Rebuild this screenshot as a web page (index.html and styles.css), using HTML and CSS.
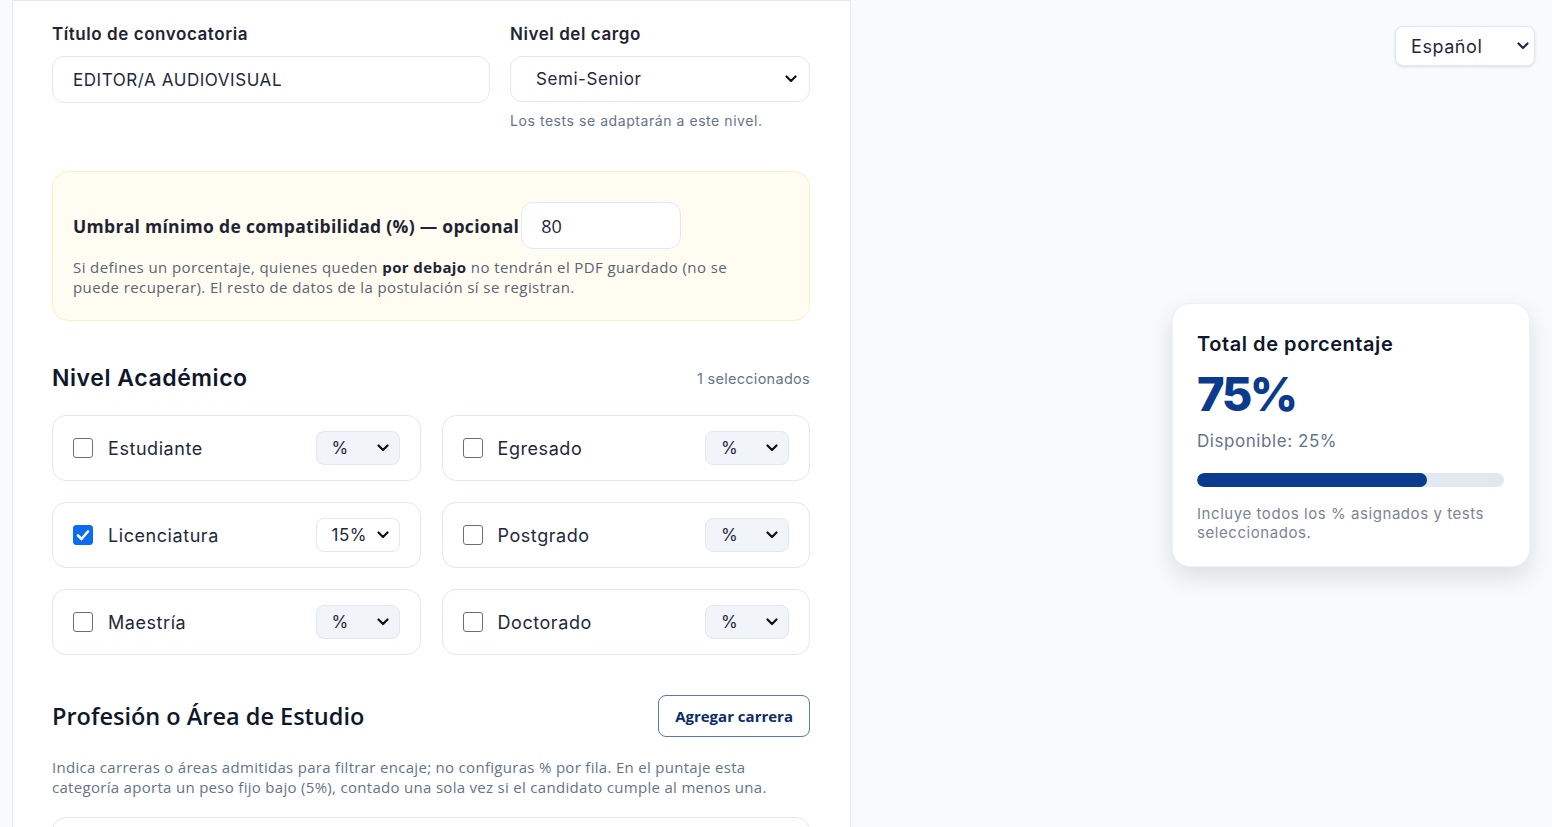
FILE: index.html
```html
<!DOCTYPE html>
<html>
  <head>
    <title>Convocatoria</title>
    <link rel="stylesheet" href="styles.css">
  </head>

  <body>
    <div class="layout">
      <main class="panel">
        <div class="row-top">
          <div class="field field-title">
            <label class="field-label" for="titulo">Título de convocatoria</label>
            <input class="text-input" type="text" id="titulo" value="EDITOR/A AUDIOVISUAL" />
          </div>
          <div class="field field-level">
            <label class="field-label" for="nivel">Nivel del cargo</label>
            <div class="select-box">
              <span>Semi-Senior</span>
              <svg class="chev" viewBox="0 0 12 8" width="12" height="8"><path d="M1.5 1.5 6 6l4.5-4.5" fill="none" stroke="#111" stroke-width="2.2" stroke-linecap="round" stroke-linejoin="round"/></svg>
            </div>
            <p class="hint">Los tests se adaptarán a este nivel.</p>
          </div>
        </div>

        <section class="threshold">
          <div class="threshold-row">
            <label class="threshold-label" for="umbral">Umbral mínimo de compatibilidad (%) — opcional</label>
            <input class="threshold-input" type="text" id="umbral" value="80" />
          </div>
          <p class="threshold-note">Si defines un porcentaje, quienes queden <b>por debajo</b> no tendrán el PDF guardado (no se puede recuperar). El resto de datos de la postulación sí se registran.</p>
        </section>

        <div class="section-head">
          <h2>Nivel Académico</h2>
          <span class="count">1 seleccionados</span>
        </div>

        <div class="grid">
          <div class="opt">
            <span class="box"></span><span class="opt-name">Estudiante</span>
            <div class="pct empty">%<svg class="chev" viewBox="0 0 12 8" width="12" height="8"><path d="M1.5 1.5 6 6l4.5-4.5" fill="none" stroke="#111" stroke-width="2.2" stroke-linecap="round" stroke-linejoin="round"/></svg></div>
          </div>
          <div class="opt">
            <span class="box"></span><span class="opt-name">Egresado</span>
            <div class="pct empty">%<svg class="chev" viewBox="0 0 12 8" width="12" height="8"><path d="M1.5 1.5 6 6l4.5-4.5" fill="none" stroke="#111" stroke-width="2.2" stroke-linecap="round" stroke-linejoin="round"/></svg></div>
          </div>
          <div class="opt">
            <span class="box checked"><svg viewBox="0 0 20 20" width="20" height="20"><path d="M5 10.5 8.5 14 15 6.5" fill="none" stroke="#fff" stroke-width="2.6" stroke-linecap="round" stroke-linejoin="round"/></svg></span><span class="opt-name">Licenciatura</span>
            <div class="pct">15%<svg class="chev" viewBox="0 0 12 8" width="12" height="8"><path d="M1.5 1.5 6 6l4.5-4.5" fill="none" stroke="#111" stroke-width="2.2" stroke-linecap="round" stroke-linejoin="round"/></svg></div>
          </div>
          <div class="opt">
            <span class="box"></span><span class="opt-name">Postgrado</span>
            <div class="pct empty">%<svg class="chev" viewBox="0 0 12 8" width="12" height="8"><path d="M1.5 1.5 6 6l4.5-4.5" fill="none" stroke="#111" stroke-width="2.2" stroke-linecap="round" stroke-linejoin="round"/></svg></div>
          </div>
          <div class="opt">
            <span class="box"></span><span class="opt-name">Maestría</span>
            <div class="pct empty">%<svg class="chev" viewBox="0 0 12 8" width="12" height="8"><path d="M1.5 1.5 6 6l4.5-4.5" fill="none" stroke="#111" stroke-width="2.2" stroke-linecap="round" stroke-linejoin="round"/></svg></div>
          </div>
          <div class="opt">
            <span class="box"></span><span class="opt-name">Doctorado</span>
            <div class="pct empty">%<svg class="chev" viewBox="0 0 12 8" width="12" height="8"><path d="M1.5 1.5 6 6l4.5-4.5" fill="none" stroke="#111" stroke-width="2.2" stroke-linecap="round" stroke-linejoin="round"/></svg></div>
          </div>
        </div>

        <div class="section-head career-head">
          <h2 class="narrow">Profesión o Área de Estudio</h2>
          <button class="outline-btn">Agregar carrera</button>
        </div>
        <p class="career-note">Indica carreras o áreas admitidas para filtrar encaje; no configuras % por fila. En el puntaje esta categoría aporta un peso fijo bajo (5%), contado una sola vez si el candidato cumple al menos una.</p>
        <div class="career-card"></div>
      </main>

      <aside class="side">
        <div class="lang">
          <span>Español</span>
          <svg class="chev" viewBox="0 0 12 8" width="12" height="8"><path d="M1.5 1.5 6 6l4.5-4.5" fill="none" stroke="#1e293b" stroke-width="2.2" stroke-linecap="round" stroke-linejoin="round"/></svg>
        </div>
        <div class="total-card">
          <h3>Total de porcentaje</h3>
          <div class="total-value">75%</div>
          <div class="available">Disponible: 25%</div>
          <div class="bar"><div class="bar-fill" style="width: 75%"></div></div>
          <p class="total-note">Incluye todos los % asignados y tests seleccionados.</p>
        </div>
      </aside>
    </div>
  </body>
</html>
```

FILE: styles.css
```css
* {
  box-sizing: border-box;
}

html,
body {
  margin: 0;
  height: 100%;
  overflow: hidden;
}

body {
  font-family: Inter, "Noto Sans", sans-serif;
  letter-spacing: 0.035em;
  color: #1e293b;
  background: #f8fafc;
}

.layout {
  display: flex;
  height: 100%;
  padding-left: 12px;
}

.panel {
  width: 839px;
  background: #fff;
  border-left: 1px solid #e5e9f0;
  border-right: 1px solid #e5e9f0;
  border-top: 1px solid #e5e9f0;
  padding: 22px 40px 0 39px;
  flex-shrink: 0;
}

.row-top {
  display: flex;
  gap: 20px;
}

.field-title {
  width: 438px;
}

.field-level {
  width: 300px;
}

.field-label {
  display: block;
  font-size: 17px;
  font-weight: 600;
  color: #1e2433;
  margin-bottom: 11px;
  line-height: 22px;
}

.text-input {
  width: 100%;
  height: 47px;
  border: 1px solid #e2e8f0;
  border-radius: 12px;
  padding: 0 20px;
  font-family: inherit;
  letter-spacing: inherit;
  font-size: 17px;
  color: #1e293b;
  background: #fff;
}

.select-box {
  height: 46px;
  border: 1px solid #e2e8f0;
  border-radius: 12px;
  display: flex;
  align-items: center;
  justify-content: space-between;
  padding: 0 12px 0 25px;
  font-size: 17px;
}

.chev {
  display: block;
}

.hint {
  margin: 9px 0 0;
  font-size: 14px;
  color: #64748b;
  line-height: 20px;
}

.threshold {
  margin-top: 40px;
  background: #fffdf2;
  border: 1px solid #fcf1c4;
  border-radius: 16px;
  padding: 30px 20px 23px;
  font-family: "Open Sans", sans-serif;
  letter-spacing: 0;
}

.threshold-row {
  display: flex;
  align-items: center;
  gap: 2px;
}

.threshold-label {
  font-size: 17.5px;
  font-weight: 700;
  letter-spacing: 0.3px;
  color: #1e2433;
}

.threshold-input {
  width: 160px;
  height: 47px;
  border: 1px solid #e2e8f0;
  border-radius: 12px;
  padding: 0 19px;
  font-family: "Open Sans", sans-serif;
  font-size: 18px;
  color: #1e293b;
  background: #fff;
}

.threshold-note {
  margin: 8px 0 0;
  max-width: 670px;
  font-size: 15px;
  line-height: 20px;
  letter-spacing: 0.4px;
  color: #5b6473;
}

.threshold-note b {
  color: #1e2433;
}

.section-head {
  display: flex;
  align-items: center;
  justify-content: space-between;
  margin-top: 43px;
}

.section-head h2 {
  margin: 0;
  font-size: 23px;
  font-weight: 600;
  color: #0f172a;
}

.count {
  font-size: 14.5px;
  color: #64748b;
  letter-spacing: 0.02em;
}

.grid {
  display: grid;
  grid-template-columns: 1fr 1fr;
  gap: 21px;
  margin-top: 23px;
}

.opt {
  height: 66px;
  border: 1px solid #e2e8f0;
  border-radius: 14px;
  display: flex;
  align-items: center;
  padding: 0 20px;
}

.box {
  width: 20px;
  height: 20px;
  border: 1.5px solid #6b6f76;
  border-radius: 3px;
  flex-shrink: 0;
}

.box.checked {
  background: #0b6cf0;
  border-color: #0b6cf0;
}

.box.checked svg {
  display: block;
  margin: -1.5px;
}

.opt-name {
  margin-left: 15px;
  font-size: 18px;
  color: #1e293b;
  flex: 1;
}

.pct {
  width: 84px;
  height: 34px;
  border: 1px solid #e2e8f0;
  border-radius: 8px;
  display: flex;
  align-items: center;
  justify-content: space-between;
  padding: 0 10px 0 15px;
  font-size: 17px;
  background: #fff;
}

.pct.empty {
  background: #f1f4f9;
}

.career-head {
  margin-top: 40px;
}

.narrow {
  font-family: "Open Sans", sans-serif;
  letter-spacing: 0;
}

.section-head h2.narrow {
  font-size: 23.5px;
  font-weight: 600;
}

.outline-btn {
  height: 42px;
  padding: 0 16px;
  border: 1px solid #5a79b3;
  border-radius: 8px;
  background: #fff;
  font-family: "Open Sans", sans-serif;
  font-size: 15px;
  font-weight: 700;
  color: #0b2d6b;
}

.career-note {
  margin: 20px 0 0;
  font-family: "Open Sans", sans-serif;
  letter-spacing: 0.3px;
  font-size: 15px;
  line-height: 20px;
  color: #64748b;
}

.career-card {
  margin-top: 20px;
  height: 60px;
  border: 1px solid #e2e8f0;
  border-radius: 14px;
}

.side {
  flex: 1;
  display: flex;
  flex-direction: column;
  align-items: flex-end;
  padding: 26px 17px 0 0;
}

.lang {
  width: 140px;
  height: 40px;
  background: #fff;
  border: 1px solid #e2e8f0;
  border-radius: 8px;
  box-shadow: 0 1px 3px rgba(15, 23, 42, 0.12);
  display: flex;
  align-items: center;
  justify-content: space-between;
  padding: 0 5px 0 15px;
  font-size: 18px;
  color: #1e293b;
}

.total-card {
  margin-top: 237px;
  margin-right: 5px;
  width: 358px;
  background: #fff;
  border: 1px solid #eef1f5;
  border-radius: 18px;
  box-shadow: 0 10px 25px rgba(15, 23, 42, 0.12);
  padding: 28px 25px 24px 24px;
}

.total-card h3 {
  margin: 0;
  font-size: 20px;
  font-weight: 600;
  color: #0f172a;
}

.total-value {
  margin-top: 10px;
  font-size: 47px;
  font-weight: 800;
  letter-spacing: -2.5px;
  color: #0b3b8c;
  line-height: 56px;
}

.available {
  margin-top: 9px;
  font-size: 17px;
  color: #64748b;
}

.bar {
  margin-top: 22px;
  height: 14px;
  background: #e2e8f0;
  border-radius: 7px;
  overflow: hidden;
}

.bar-fill {
  height: 100%;
  background: #0b3b8c;
  border-radius: 7px;
}

.total-note {
  margin: 17px 0 0;
  font-size: 15px;
  line-height: 19px;
  color: #7b8494;
}
```
